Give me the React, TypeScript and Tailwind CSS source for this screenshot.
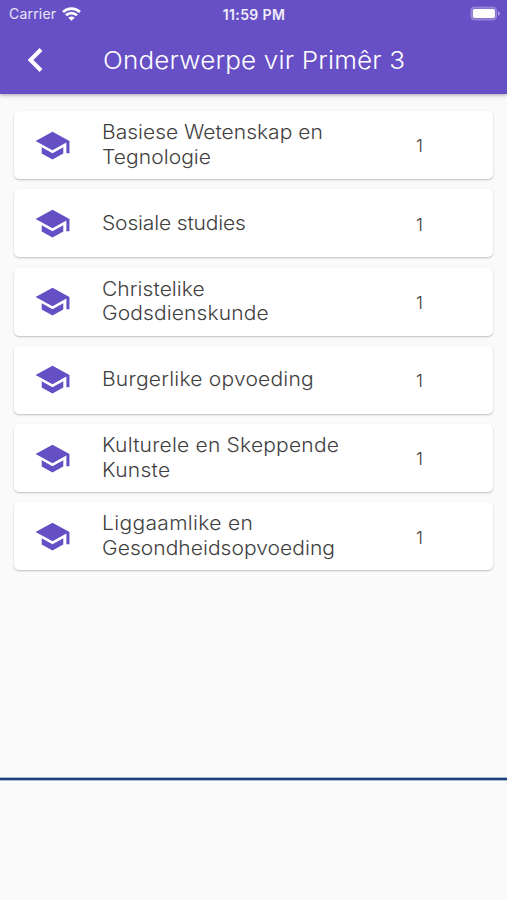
type Line = { text: string; spacing: string };

const subjects: { lines: Line[]; count: number }[] = [
  { lines: [{ text: 'Basiese Wetenskap en', spacing: 'tracking-[0px]' }, { text: 'Tegnologie', spacing: 'tracking-[0.05px]' }], count: 1 },
  { lines: [{ text: 'Sosiale studies', spacing: 'tracking-[-0.15px]' }], count: 1 },
  { lines: [{ text: 'Christelike', spacing: 'tracking-[0.05px]' }, { text: 'Godsdienskunde', spacing: 'tracking-[0.1px]' }], count: 1 },
  { lines: [{ text: 'Burgerlike opvoeding', spacing: 'tracking-[0.2px]' }], count: 1 },
  { lines: [{ text: 'Kulturele en Skeppende', spacing: 'tracking-[0.18px]' }, { text: 'Kunste', spacing: 'tracking-[0.25px]' }], count: 1 },
  { lines: [{ text: 'Liggaamlike en', spacing: 'tracking-[0.3px]' }, { text: 'Gesondheidsopvoeding', spacing: 'tracking-[0.03px]' }], count: 1 },
];

function WifiIcon() {
  return (
    <svg className="ml-[5.5px] h-[14px] w-[19px]" viewBox="0 0 19 14" fill="none" stroke="#fff" strokeWidth="2.7">
      <path d="M1 5C5.8.4 13.2.4 18 5" />
      <path d="M4 8.3c3-2.9 8-2.9 11 0" />
      <path d="M6.3 10.7c1.8-1.6 4.6-1.6 6.4 0l-3.2 3.1z" fill="#fff" stroke="none" />
    </svg>
  );
}

function BatteryIcon() {
  return (
    <svg className="h-[15px] w-[31px]" viewBox="0 0 31 15">
      <rect x="1" y="1" width="25.5" height="12.8" rx="3.6" fill="#fff" fillOpacity=".2" stroke="#fff" strokeOpacity=".25" strokeWidth="1.2" />
      <rect x="2.9" y="2.9" width="22" height="9" rx="1.6" fill="#fff" />
      <path d="M28 5.2c2.6 1 2.6 3.6 0 4.6z" fill="#fff" fillOpacity=".45" />
    </svg>
  );
}

function SchoolIcon() {
  return (
    <svg className="h-[37px] w-[37px] shrink-0" viewBox="0 0 24 24" fill="#654fc4">
      <path d="M5 13.18v4L12 21l7-3.82v-4L12 17l-7-3.82zM12 3L1 9l11 6 9-4.91V17h2V9L12 3z" />
    </svg>
  );
}

export default function App() {
  return (
    <div className="flex h-[900px] w-[507px] flex-col overflow-hidden bg-[#fafafa] font-['Inter',sans-serif]">
      <header className="h-[94px] shrink-0 bg-[#6750c5] text-white shadow-[0_1px_4px_rgba(0,0,0,0.35)]">
        <div className="grid h-[27px] grid-cols-3 items-center">
          <div className="flex items-center pl-[9px]">
            <span className="text-[14px] leading-[27px] tracking-[0.2px] text-white/85">Carrier</span>
            <WifiIcon />
          </div>
          <span className="pl-[1px] pt-[1px] text-center text-[14px] font-semibold tracking-[0.4px] text-white/90">11:59 PM</span>
          <div className="flex justify-end pr-[6px]"><BatteryIcon /></div>
        </div>
        <div className="flex h-[66px] items-center pl-[27px]">
          <svg className="h-[26px] w-[17px]" viewBox="0 0 17 26" fill="none" stroke="#fff" strokeWidth="4">
            <path d="M14 2.5 3.5 13 14 23.5" />
          </svg>
          <h1 className="ml-[58.5px] origin-left scale-x-[1.085] whitespace-nowrap pt-[1px] text-[24px] font-[330] tracking-[0.15px]">Onderwerpe vir Primêr 3</h1>
        </div>
      </header>
      <main className="flex h-[683px] shrink-0 flex-col gap-[10.25px] px-[14px] pt-[17px]">
        {subjects.map((subject) => (
          <div
            key={subject.lines[0].text}
            className="flex h-[68px] shrink-0 items-center rounded-[5px] bg-white pl-[20px] text-[#3f3f3f] shadow-[0_1px_2px_rgba(0,0,0,0.24)]"
          >
            <SchoolIcon />
            <div className="ml-[31px] flex w-[300px] origin-left scale-x-[1.078] flex-col pb-[1px] text-[19.5px] font-[350] leading-[24.5px]">
              {subject.lines.map((line) => (
                <span key={line.text} className={'whitespace-nowrap ' + line.spacing}>{line.text}</span>
              ))}
            </div>
            <span className="ml-[14px] pt-[3px] text-[17.5px] font-[350]">{subject.count}</span>
          </div>
        ))}
      </main>
      <div className="h-[4px] shrink-0 border-y border-[#a9bad3] bg-[#1e4078]" />
    </div>
  );
}
